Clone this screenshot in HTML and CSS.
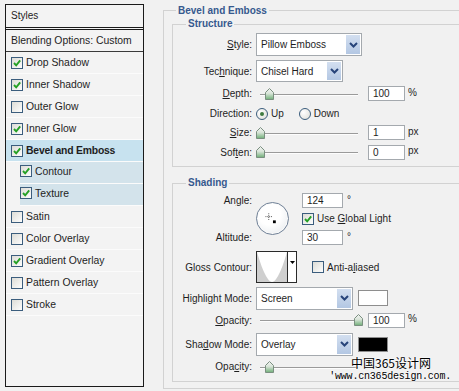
FILE: index.html
```html
<!DOCTYPE html>
<html lang="en">
  <head>
    <meta charset="UTF-8" />
    <title>Layer Style - Bevel and Emboss</title>
    <link rel="stylesheet" href="styles.css">
  </head>
  <body>
    <svg class="defs" width="0" height="0">
      <defs>
        <linearGradient id="thumbFill" x1="0" y1="0" x2="0" y2="1">
          <stop offset="0" stop-color="#f4f4f4" />
          <stop offset="0.45" stop-color="#d8e4d8" />
          <stop offset="1" stop-color="#6fae77" />
        </linearGradient>
      </defs>
    </svg>

    <!-- styles list -->
    <div class="styles-panel">
      <div class="panel-head">Styles</div>
      <div class="panel-blend">Blending Options: Custom</div>
      <ul class="fx-list">
        <li class="fx"><span class="check on"><svg viewBox="0 0 10 10"><path d="M2 5 L4.2 7.4 L8.2 2.4" /></svg></span>Drop Shadow</li>
        <li class="fx"><span class="check on"><svg viewBox="0 0 10 10"><path d="M2 5 L4.2 7.4 L8.2 2.4" /></svg></span>Inner Shadow</li>
        <li class="fx"><span class="check"></span>Outer Glow</li>
        <li class="fx"><span class="check on"><svg viewBox="0 0 10 10"><path d="M2 5 L4.2 7.4 L8.2 2.4" /></svg></span>Inner Glow</li>
        <li class="fx sel"><span class="check on"><svg viewBox="0 0 10 10"><path d="M2 5 L4.2 7.4 L8.2 2.4" /></svg></span>Bevel and Emboss</li>
        <li class="fx sub"><span class="check on"><svg viewBox="0 0 10 10"><path d="M2 5 L4.2 7.4 L8.2 2.4" /></svg></span>Contour</li>
        <li class="fx sub"><span class="check on"><svg viewBox="0 0 10 10"><path d="M2 5 L4.2 7.4 L8.2 2.4" /></svg></span>Texture</li>
        <li class="fx"><span class="check"></span>Satin</li>
        <li class="fx"><span class="check"></span>Color Overlay</li>
        <li class="fx"><span class="check on"><svg viewBox="0 0 10 10"><path d="M2 5 L4.2 7.4 L8.2 2.4" /></svg></span>Gradient Overlay</li>
        <li class="fx"><span class="check"></span>Pattern Overlay</li>
        <li class="fx"><span class="check"></span>Stroke</li>
      </ul>
    </div>

    <fieldset class="group outer">
      <legend>Bevel and Emboss</legend>

      <fieldset class="group sub structure">
        <legend>Structure</legend>
        <div class="form">
          <span class="lbl"><u>S</u>tyle:</span>
          <div class="ctl">
            <div class="select style-select"><span class="val">Pillow Emboss</span><span class="drop"><svg viewBox="0 0 9 6"><path d="M1 1 L4.5 4.5 L8 1" /></svg></span></div>
          </div>

          <span class="lbl">Tec<u>h</u>nique:</span>
          <div class="ctl">
            <div class="select tech-select"><span class="val">Chisel Hard</span><span class="drop"><svg viewBox="0 0 9 6"><path d="M1 1 L4.5 4.5 L8 1" /></svg></span></div>
          </div>

          <span class="lbl"><u>D</u>epth:</span>
          <div class="ctl">
            <div class="slider"><span class="track"></span><span class="rail"><svg class="thumb" style="left: 10%" viewBox="0 0 9 12"><path d="M0.5 4.5 L4.5 0.5 L8.5 4.5 V11.5 H0.5 Z" /></svg></span></div>
            <span class="num">100</span><span class="unit">%</span>
          </div>

          <span class="lbl">Direction:</span>
          <div class="ctl">
            <span class="radio on"></span><span class="opt">Up</span>
            <span class="radio down"></span><span class="opt">Down</span>
          </div>

          <span class="lbl"><u>S</u>ize:</span>
          <div class="ctl">
            <div class="slider"><span class="track"></span><span class="rail"><svg class="thumb" style="left: 0%" viewBox="0 0 9 12"><path d="M0.5 4.5 L4.5 0.5 L8.5 4.5 V11.5 H0.5 Z" /></svg></span></div>
            <span class="num">1</span><span class="unit">px</span>
          </div>

          <span class="lbl">Sof<u>t</u>en:</span>
          <div class="ctl">
            <div class="slider"><span class="track"></span><span class="rail"><svg class="thumb" style="left: 0%" viewBox="0 0 9 12"><path d="M0.5 4.5 L4.5 0.5 L8.5 4.5 V11.5 H0.5 Z" /></svg></span></div>
            <span class="num">0</span><span class="unit">px</span>
          </div>
        </div>
      </fieldset>

      <fieldset class="group sub shading">
        <legend>Shading</legend>
        <div class="form shade-form">
          <span class="lbl angle-lbl">An<u>g</u>le:</span>
          <div class="dial">
            <svg viewBox="0 0 33 33">
              <path class="cross" d="M12.5 11 V18 M9 14.5 H16" />
              <rect x="17" y="18.5" width="3" height="3" />
            </svg>
          </div>
          <div class="ctl angle-ctl"><span class="num short">124</span><span class="deg">°</span></div>
          <div class="ctl global-ctl"><span class="check on"><svg viewBox="0 0 10 10"><path d="M2 5 L4.2 7.4 L8.2 2.4" /></svg></span><span class="opt">Use <u>G</u>lobal Light</span></div>

          <span class="lbl alt-lbl">Altitude:</span>
          <div class="ctl alt-ctl"><span class="num short">30</span><span class="deg">°</span></div>

          <span class="lbl gloss-lbl">Gloss Contour:</span>
          <div class="ctl gloss-ctl">
            <div class="contour">
              <svg class="curve" viewBox="0 0 30 30" preserveAspectRatio="none">
                <rect width="30" height="30" fill="#cfcfcf" />
                <path d="M0 0 C4 14 10 30 15 30 C20 30 26 14 30 0 Z" fill="#fff" />
              </svg>
              <span class="contour-drop"><svg viewBox="0 0 7 4"><path d="M0 0 H7 L3.5 4 Z" /></svg></span>
            </div>
            <span class="check"></span><span class="opt">Anti-a<u>l</u>iased</span>
          </div>

          <span class="lbl hl-lbl">Hi<u>g</u>hlight Mode:</span>
          <div class="ctl hl-ctl">
            <div class="select mode-select"><span class="val">Screen</span><span class="drop"><svg viewBox="0 0 9 6"><path d="M1 1 L4.5 4.5 L8 1" /></svg></span></div>
            <span class="swatch white"></span>
          </div>

          <span class="lbl op1-lbl"><u>O</u>pacity:</span>
          <div class="ctl op1-ctl">
            <div class="slider"><span class="track"></span><span class="rail"><svg class="thumb" style="left: 100%" viewBox="0 0 9 12"><path d="M0.5 4.5 L4.5 0.5 L8.5 4.5 V11.5 H0.5 Z" /></svg></span></div>
            <span class="num">100</span><span class="unit">%</span>
          </div>

          <span class="lbl sh-lbl">Sha<u>d</u>ow Mode:</span>
          <div class="ctl sh-ctl">
            <div class="select mode-select"><span class="val">Overlay</span><span class="drop"><svg viewBox="0 0 9 6"><path d="M1 1 L4.5 4.5 L8 1" /></svg></span></div>
            <span class="swatch black"></span>
          </div>

          <span class="lbl op2-lbl">Opa<u>c</u>ity:</span>
          <div class="ctl op2-ctl">
            <div class="slider"><span class="track"></span><span class="rail"><svg class="thumb" style="left: 10%" viewBox="0 0 9 12"><path d="M0.5 4.5 L4.5 0.5 L8.5 4.5 V11.5 H0.5 Z" /></svg></span></div>
          </div>
        </div>
      </fieldset>
    </fieldset>

    <div class="watermark">
      <span class="wm-cn">中国365设计网</span>
      <span class="wm-url">'www.cn365design.com.</span>
    </div>
  </body>
</html>
```

FILE: styles.css
```css
body {
  margin: 0;
  height: 391px;
  overflow: hidden;
  position: relative;
  display: flex;
  align-items: flex-start;
  background: #f1f1f1;
  color: #1e1e1e;
  font-family: "Liberation Sans", Arial, sans-serif;
  font-size: 10px;
}
.defs {
  position: absolute;
}
u {
  text-decoration-thickness: 1px;
  text-underline-offset: 1px;
}

/* left list */
.styles-panel {
  flex: none;
  width: 139px;
  height: 383px;
  box-sizing: border-box;
  margin: 4px 0 0 5px;
  border: 1px solid #1a1a1a;
  background: #f3f3f3;
}
.panel-head {
  height: 22px;
  line-height: 22px;
  padding-left: 5px;
  border-bottom: 3px double #1a1a1a;
}
.panel-blend {
  height: 21px;
  line-height: 21px;
  padding-left: 5px;
  border-bottom: 1px solid #3a3a3a;
  font-size: 10.4px;
}
.fx-list {
  list-style: none;
  margin: 0;
  padding: 0;
}
.fx {
  height: 22px;
  box-sizing: border-box;
  display: flex;
  align-items: center;
  gap: 3px;
  padding-left: 5px;
  border-bottom: 1px solid #fbfbfb;
  font-size: 10.4px;
}
.fx.sel {
  background: #c7e2ef;
  font-weight: bold;
  letter-spacing: -0.2px;
}
.fx.sub {
  margin-left: 14px;
  background: #d3e3eb;
}

.check {
  flex: none;
  width: 12px;
  height: 12px;
  box-sizing: border-box;
  border: 1px solid #3b5d7d;
  background: linear-gradient(135deg, #dcdcd6, #fdfdfd);
  display: flex;
  align-items: center;
  justify-content: center;
}
.check svg {
  width: 10px;
  height: 10px;
}
.check path {
  fill: none;
  stroke: #25a025;
  stroke-width: 1.9;
}

/* group boxes */
.group {
  margin: 0;
  border: 1px solid #d2d2d2;
  min-width: 0;
}
.group legend {
  padding: 0 2px;
  font-weight: bold;
  color: #36598e;
  line-height: 14px;
}
.outer {
  flex: none;
  width: 330px;
  margin: 4px 0 0 19px;
  padding: 0 0 6px 8px;
}
.outer > legend {
  margin-left: 4px;
  line-height: 13px;
}
.sub {
  padding: 0 0 3px 0;
}
.sub > legend {
  margin-left: 13px;
}
.shading {
  margin-top: 9px;
  padding-bottom: 5px;
}

/* forms */
.form {
  display: grid;
  grid-template-columns: 79px auto;
  grid-template-rows: 27px 26px 19px 21px 17px 22px;
  column-gap: 4px;
  align-items: center;
}
.lbl {
  text-align: right;
  white-space: nowrap;
}
.ctl {
  display: flex;
  align-items: center;
}

.select {
  display: flex;
  box-sizing: border-box;
  border: 1px solid #a4a9ae;
  background: #fff;
}
.select .val {
  flex: 1;
  padding-left: 4px;
  display: flex;
  align-items: center;
}
.select .drop {
  flex: none;
  width: 16px;
  box-sizing: border-box;
  border: 1px solid #fff;
  background: linear-gradient(#d3dff0, #b3c7e3);
  display: flex;
  align-items: center;
  justify-content: center;
}
.select .drop svg {
  width: 9px;
  height: 6px;
}
.select .drop path {
  fill: none;
  stroke: #27447a;
  stroke-width: 2;
}
.style-select {
  width: 106px;
  height: 23px;
}
.tech-select {
  width: 87px;
  height: 22px;
}
.mode-select {
  width: 97px;
  height: 23px;
}

.slider {
  position: relative;
  flex: none;
  width: 106px;
  height: 12px;
  margin-right: 6px;
}
.slider .track {
  position: absolute;
  left: 4px;
  right: 4px;
  top: 6px;
  border-top: 1px solid #9a9a9a;
  border-bottom: 1px solid #fdfdfd;
}
.slider .rail {
  position: absolute;
  left: 4px;
  right: 4px;
  top: 0;
  bottom: 0;
}
.slider .thumb {
  position: absolute;
  top: 0;
  width: 9px;
  height: 12px;
  margin-left: -4.5px;
}
.slider .thumb path {
  fill: url(#thumbFill);
  stroke: #7a8f80;
  stroke-width: 1;
}

.num {
  flex: none;
  width: 37px;
  height: 15px;
  box-sizing: border-box;
  border: 1px solid #a4a9ae;
  background: #fff;
  padding-left: 4px;
  line-height: 13px;
}
.num.short {
  width: 41px;
}
.unit {
  margin-left: 3px;
  padding-bottom: 3px;
}
.deg {
  margin-left: 4px;
  align-self: flex-start;
  margin-top: 1px;
}

.radio {
  flex: none;
  width: 12px;
  height: 12px;
  box-sizing: border-box;
  border-radius: 50%;
  border: 1px solid #3b5d7d;
  background: radial-gradient(circle at 35% 35%, #ffffff, #dcdcd6);
  display: flex;
  align-items: center;
  justify-content: center;
}
.radio.on::after {
  content: "";
  width: 4px;
  height: 4px;
  border-radius: 50%;
  background: #3f7a3f;
}
.radio.down {
  margin-left: 15px;
}
.opt {
  margin-left: 3px;
}

/* shading grid */
.shade-form {
  grid-template-columns: 79px 42px auto;
  grid-template-rows: 20px 17px 20px 40px 22px 22px 26px 19px;
}
.angle-lbl { grid-area: 1 / 1; }
.dial {
  grid-area: 1 / 2 / 4 / 3;
  width: 33px;
  height: 33px;
  box-sizing: border-box;
  border-radius: 50%;
  border: 1px solid #6f8096;
  background: radial-gradient(circle at 40% 35%, #ffffff 40%, #e2e6ea);
  box-shadow: inset 0 0 0 1px #fafafa;
}
.dial svg {
  display: block;
  width: 31px;
  height: 31px;
}
.dial .cross {
  stroke: #222;
  stroke-width: 0.8;
  stroke-dasharray: 1 1;
}
.angle-ctl { grid-area: 1 / 3; }
.global-ctl { grid-area: 2 / 3; }
.alt-lbl { grid-area: 3 / 1; }
.alt-ctl { grid-area: 3 / 3; }
.gloss-lbl { grid-area: 4 / 1; }
.gloss-ctl { grid-area: 4 / 2 / 5 / 4; }
.hl-lbl { grid-area: 5 / 1; }
.hl-ctl { grid-area: 5 / 2 / 6 / 4; }
.op1-lbl { grid-area: 6 / 1; }
.op1-ctl { grid-area: 6 / 2 / 7 / 4; }
.sh-lbl { grid-area: 7 / 1; }
.sh-ctl { grid-area: 7 / 2 / 8 / 4; }
.op2-lbl { grid-area: 8 / 1; }
.op2-ctl { grid-area: 8 / 2 / 9 / 4; }

.contour {
  flex: none;
  display: flex;
  width: 41px;
  height: 32px;
  box-sizing: border-box;
  border: 1px solid #2a2a2a;
  background: #fff;
  margin-right: 15px;
}
.contour .curve {
  width: 30px;
  height: 30px;
}
.contour-drop {
  flex: 1;
  border-left: 1px solid #2a2a2a;
  display: flex;
  justify-content: center;
  padding-top: 9px;
}
.contour-drop svg {
  width: 5px;
  height: 3px;
}

.swatch {
  flex: none;
  width: 30px;
  height: 16px;
  box-sizing: border-box;
  margin-left: 5px;
  border: 1px solid #8e8e8e;
}
.swatch.white {
  background: #fff;
}
.swatch.black {
  background: #000;
  height: 15px;
}

/* watermark */
.watermark {
  position: absolute;
  left: 333px;
  top: 356px;
  display: flex;
  flex-direction: column;
  align-items: flex-end;
  width: 118px;
  color: #000;
  text-shadow: 0 0 2px #fff, 0 0 2px #fff;
}
.wm-cn {
  font-family: "Noto Sans CJK SC", sans-serif;
  font-size: 12px;
  line-height: 14px;
  margin-right: 20px;
}
.wm-url {
  font-family: "Liberation Mono", monospace;
  font-size: 10px;
  line-height: 10px;
  margin-top: 2px;
  letter-spacing: -0.2px;
}
```
